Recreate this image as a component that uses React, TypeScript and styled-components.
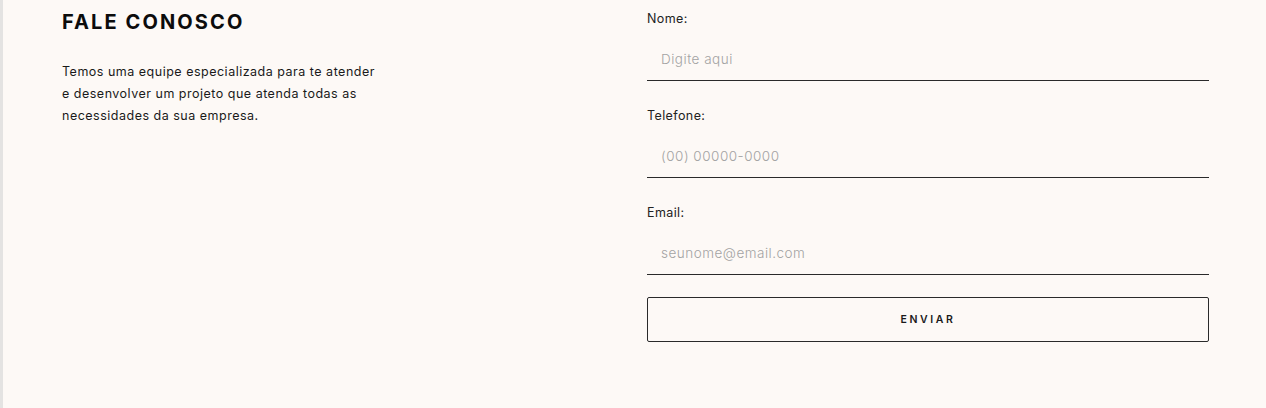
import React from "react";
import styled, { createGlobalStyle } from "styled-components";

const Global = createGlobalStyle`
  html, body { margin: 0; padding: 0; background: #fdf9f6; }
  body { font-family: Inter, "Liberation Sans", Arial, sans-serif; color: #111; }
  * { box-sizing: border-box; }
`;

const Page = styled.section`
  min-height: 408px;
  border-left: 3px solid #e4e3e2;
  background: #fdf9f6;
  padding: 0 57px 0 59px;
  display: flex;
  justify-content: space-between;
  align-items: flex-start;
`;

const Intro = styled.div`
  max-width: 320px;
  padding-top: 10px;
`;

const Title = styled.h2`
  margin: 0;
  font-size: 20px;
  line-height: 24px;
  font-weight: 700;
  letter-spacing: 2.1px;
  color: #0c0c0c;
`;

const Text = styled.p`
  margin: 27px 0 0;
  font-size: 12.5px;
  line-height: 22px;
  letter-spacing: 0.5px;
  color: #1a1a1a;
`;

const Form = styled.form`
  width: 562px;
  padding-top: 11px;
  display: flex;
  flex-direction: column;
`;

const Field = styled.label`
  display: flex;
  flex-direction: column;
  margin-bottom: 27px;
`;

const Label = styled.span`
  font-size: 12.5px;
  line-height: 16px;
  letter-spacing: 0.4px;
  color: #222;
  margin-bottom: 11px;
`;

const Input = styled.input`
  height: 43px;
  border: none;
  border-bottom: 1px solid #2a2a2a;
  background: transparent;
  padding: 0 14px;
  font-family: inherit;
  font-size: 13.5px;
  font-weight: 300;
  letter-spacing: 0.5px;
  color: #111;
  outline: none;
  &::placeholder { color: #a3a3a3; }
`;

const Button = styled.button`
  margin-top: -5px;
  height: 45px;
  border: 1px solid #2a2a2a;
  border-radius: 2px;
  background: transparent;
  font-family: inherit;
  font-size: 10.5px;
  font-weight: 600;
  letter-spacing: 2.6px;
  color: #1a1a1a;
  cursor: pointer;
`;

const fields = [
  { label: "Nome:", placeholder: "Digite aqui", type: "text" },
  { label: "Telefone:", placeholder: "(00) 00000-0000", type: "tel" },
  { label: "Email:", placeholder: "seunome@email.com", type: "email" },
];

export default function App() {
  return (
    <>
      <Global />
      <Page>
        <Intro>
          <Title>FALE CONOSCO</Title>
          <Text>
            Temos uma equipe especializada para te atender e desenvolver um projeto que atenda todas as necessidades da sua empresa.
          </Text>
        </Intro>
        <Form onSubmit={(e) => e.preventDefault()}>
          {fields.map((f) => (
            <Field key={f.label}>
              <Label>{f.label}</Label>
              <Input type={f.type} placeholder={f.placeholder} />
            </Field>
          ))}
          <Button type="submit">ENVIAR</Button>
        </Form>
      </Page>
    </>
  );
}
